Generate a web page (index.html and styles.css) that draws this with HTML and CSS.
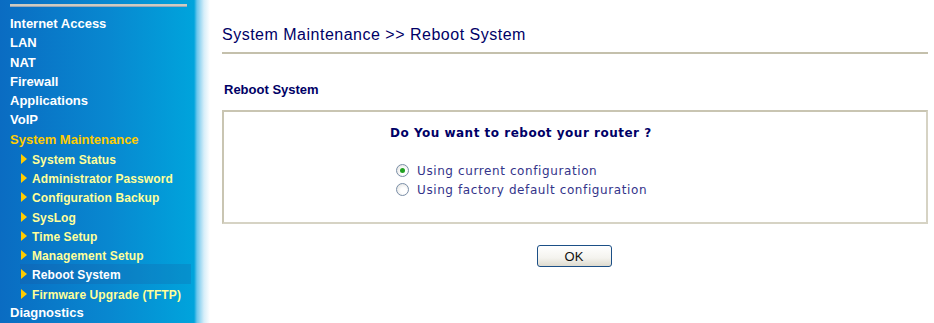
FILE: index.html
```html
<!DOCTYPE html>
<html lang="en">
<head>
  <meta charset="UTF-8">
  <title>System Maintenance - Reboot System</title>
  <link rel="stylesheet" href="styles.css">
</head>
<body>
  <div id="sidebar">
    <div class="topline"></div>
    <ul class="menu">
      <li class="item">Internet Access</li>
      <li class="item">LAN</li>
      <li class="item">NAT</li>
      <li class="item">Firewall</li>
      <li class="item">Applications</li>
      <li class="item">VoIP</li>
      <li class="item open">System Maintenance</li>
      <li class="sub">System Status</li>
      <li class="sub">Administrator Password</li>
      <li class="sub">Configuration Backup</li>
      <li class="sub">SysLog</li>
      <li class="sub">Time Setup</li>
      <li class="sub">Management Setup</li>
      <li class="sub current">Reboot System</li>
      <li class="sub">Firmware Upgrade (TFTP)</li>
      <li class="item">Diagnostics</li>
    </ul>
  </div>

  <div id="main">
    <h1 class="title">System Maintenance &gt;&gt; Reboot System</h1>
    <h2 class="section">Reboot System</h2>
    <div class="box">
      <p class="question">Do You want to reboot your router ?</p>
      <label class="option"><span class="radio checked"></span>Using current configuration</label>
      <label class="option"><span class="radio"></span>Using factory default configuration</label>
    </div>
    <div class="actions">
      <button class="ok">OK</button>
    </div>
  </div>
</body>
</html>
```

FILE: styles.css
```css
body {
  margin: 0;
  display: flex;
  height: 323px;
  background-color: #ffffff;
  font-family: "Liberation Sans", Arial, sans-serif;
  overflow: hidden;
}

#sidebar {
  width: 210px;
  flex-shrink: 0;
  background: linear-gradient(to right, #0a6cc2 0px, #0888d0 110px, #00a4dc 194px, #6cc6ec 197px, #d6eef9 204px, #ffffff 210px);
}

.topline {
  margin: 4px 23px 0 10px;
  height: 2px;
  background-color: #cfcbc0;
  border-bottom: 1px solid #9aa8b8;
}

.menu {
  list-style: none;
  margin: 0;
  padding: 7px 0 0 0;
}

.menu li {
  height: 19.27px;
  line-height: 19.27px;
  white-space: nowrap;
}

.item {
  padding-left: 10px;
  font-size: 13px;
  font-weight: bold;
  color: #ffffff;
}

.item.open {
  color: #ffcc00;
}

.menu .sub {
  margin-left: 20px;
  margin-right: 19px;
  padding-left: 12px;
  box-sizing: border-box;
  padding-top: 3px;
  line-height: 16.27px;
  font-size: 12px;
  font-weight: bold;
  letter-spacing: 0.1px;
  color: #ffff99;
  position: relative;
}

.sub::before {
  content: "";
  position: absolute;
  left: 1px;
  top: 5px;
  border-top: 5px solid transparent;
  border-bottom: 5px solid transparent;
  border-left: 6px solid #ffcc00;
}

.sub.current {
  color: #ffffff;
  background-color: rgba(30, 80, 150, 0.2);
}

#main {
  flex: 1;
  padding: 25px 6px 0 12px;
}

.title {
  margin: 0;
  font-size: 16px;
  font-weight: normal;
  letter-spacing: 0.5px;
  line-height: 20px;
  color: #000066;
  padding-bottom: 7px;
  border-bottom: 2px solid #c4c0ac;
}

.section {
  margin: 27px 0 0 2px;
  font-size: 13px;
  font-weight: bold;
  line-height: 17px;
  color: #000066;
}

.box {
  margin-top: 12px;
  height: 114px;
  border: 2px solid #d6d3c4;
  border-top-color: #c9c5b2;
  border-left-color: #c9c5b2;
  box-sizing: border-box;
  padding: 14px 0 0 166px;
}

.question {
  margin: 0 0 20px 0;
  font-family: "DejaVu Sans", Verdana, sans-serif;
  font-size: 12px;
  font-weight: bold;
  letter-spacing: 0.5px;
  color: #000066;
  line-height: 15px;
}

.option {
  display: flex;
  align-items: center;
  height: 19px;
  padding-left: 6px;
  font-family: "DejaVu Sans", Verdana, sans-serif;
  font-size: 12px;
  letter-spacing: 0.6px;
  color: #34348a;
}

.radio {
  width: 11px;
  height: 11px;
  border: 1px solid #7a8ea8;
  border-radius: 50%;
  background: radial-gradient(circle at 60% 60%, #ffffff 30%, #dcdcd8 100%);
  margin-right: 8px;
  position: relative;
}

.radio.checked::after {
  content: "";
  position: absolute;
  left: 3px;
  top: 3px;
  width: 5px;
  height: 5px;
  border-radius: 50%;
  background-color: #21a121;
}

.actions {
  display: flex;
  justify-content: center;
  padding: 21px 2px 0 0;
}

.ok {
  width: 75px;
  height: 22px;
  border: 1px solid #1c4f86;
  border-radius: 3px;
  background: linear-gradient(to bottom, #ffffff 0%, #f4f3ee 60%, #dedbcf 100%);
  font-family: "Liberation Sans", Arial, sans-serif;
  font-size: 13px;
  color: #111111;
  padding: 0;
}
```
